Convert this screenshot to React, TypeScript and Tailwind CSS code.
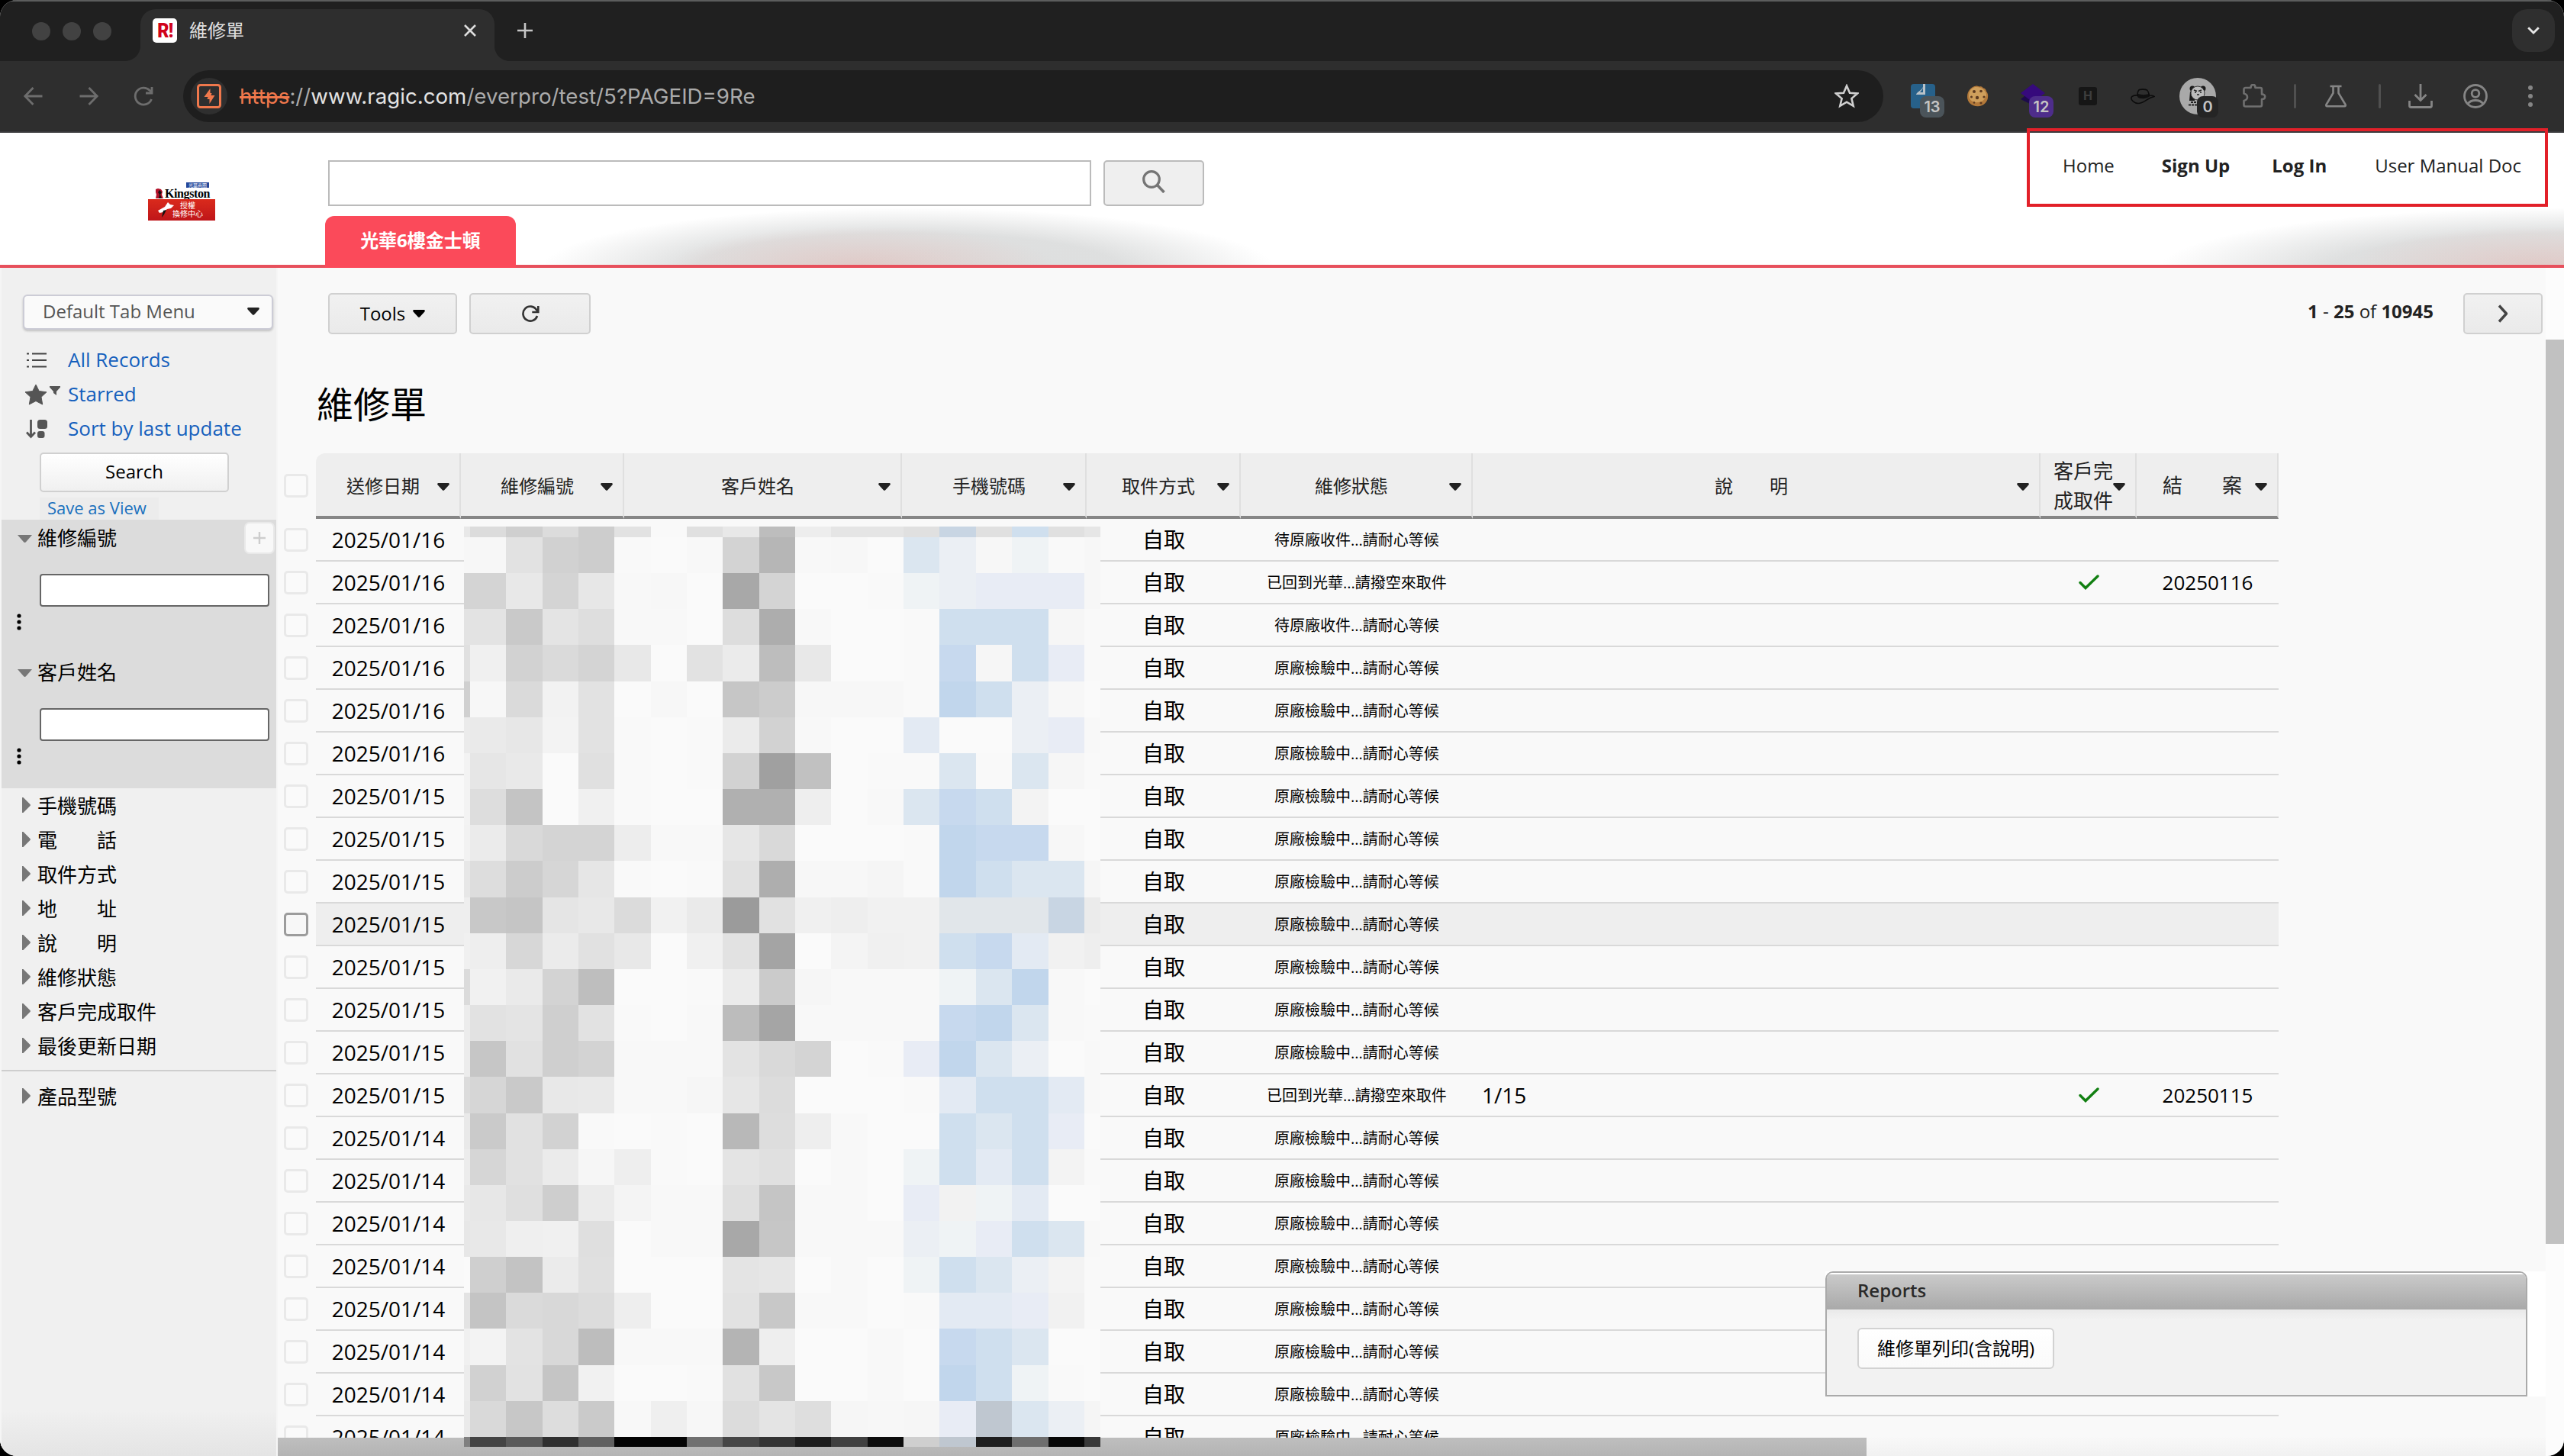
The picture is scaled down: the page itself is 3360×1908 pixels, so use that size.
import type { ReactNode } from 'react'
import clsx from 'clsx'

interface RepairRecord {
  date: string
  status: string
  note?: string
  done?: boolean
  closed?: string
}

const WAITING = '待原廠收件...請耐心等候'
const CHECKING = '原廠檢驗中...請耐心等候'
const RETURNED = '已回到光華...請撥空來取件'

const HOVERED_ROW = 9

const records: RepairRecord[] = [
  { date: '2025/01/16', status: WAITING },
  { date: '2025/01/16', status: RETURNED, done: true, closed: '20250116' },
  { date: '2025/01/16', status: WAITING },
  { date: '2025/01/16', status: CHECKING },
  { date: '2025/01/16', status: CHECKING },
  { date: '2025/01/16', status: CHECKING },
  { date: '2025/01/15', status: CHECKING },
  { date: '2025/01/15', status: CHECKING },
  { date: '2025/01/15', status: CHECKING },
  { date: '2025/01/15', status: CHECKING },
  { date: '2025/01/15', status: CHECKING },
  { date: '2025/01/15', status: CHECKING },
  { date: '2025/01/15', status: CHECKING },
  { date: '2025/01/15', status: RETURNED, note: '1/15', done: true, closed: '20250115' },
  { date: '2025/01/14', status: CHECKING },
  { date: '2025/01/14', status: CHECKING },
  { date: '2025/01/14', status: CHECKING },
  { date: '2025/01/14', status: CHECKING },
  { date: '2025/01/14', status: CHECKING },
  { date: '2025/01/14', status: CHECKING },
  { date: '2025/01/14', status: CHECKING },
  { date: '2025/01/14', status: CHECKING },
]

const columns = [
  { label: '送修日期' },
  { label: '維修編號' },
  { label: '客戶姓名' },
  { label: '手機號碼' },
  { label: '取件方式' },
  { label: '維修狀態' },
  { label: '說　　明' },
  { label: '客戶完成取件', large: true },
  { label: '結　　案', large: true },
]

const openFilters = ['維修編號', '客戶姓名']
const closedFilters = ['手機號碼', '電　　話', '取件方式', '地　　址', '說　　明', '維修狀態', '客戶完成取件', '最後更新日期']

// Letters are bluish tints, two hex digits are a plain grey
const tints: Record<string, string> = {
  p: '#c1d6ec',
  q: '#c7d9ee',
  r: '#cfdfee',
  s: '#dbe6f0',
  t: '#e3eaf3',
  u: '#ebeff4',
  v: '#c8d5e3',
  w: '#e8ecf5',
  x: '#eff3f5',
  y: '#e1e6ea',
  z: '#bfc7d0',
}

const mosaic = [
  'e8 dc cf dc cd e2 f9 e0 e8 bd ed e5 e5 e0 v e0 r e0 e6',
  'f7 f7 e2 d1 cd f9 fa f8 d3 b6 f8 f7 fa s u f7 x f9 f7',
  'd4 d4 e8 d4 e7 f8 f7 fa a8 d4 fa fa f9 x u w w w f7',
  'e3 e3 c9 e4 de f8 f8 fa dd ad f8 fa fa f9 r r r f6 f9',
  'e0 f0 d2 da d4 e8 fa e2 eb bd e8 fa fa f9 q f6 r w f9',
  'd0 f7 da f2 e2 fa f7 fa c6 cc f7 f7 f7 f9 p r u f7 fa',
  'eb ea e7 f3 e2 f9 fa f9 eb d2 f8 fa fa t fa fa u w f8',
  'f3 e6 e9 fa e0 f9 fa f9 d2 a0 c1 fa f9 f9 s f9 s f6 f9',
  'f3 dd c4 fa f0 f9 fa fa b0 b0 ee fa f8 s q r f3 fa fa',
  'f2 eb d9 d4 d4 ed f8 f8 e6 d9 fa fa fa f9 p q q f7 fa',
  'e7 dd cc d6 e6 f9 fa f9 e1 ae f7 f7 f5 f9 p r s s f6',
  'ee c8 c5 e5 e8 db f1 ea 9b e1 f0 ee f1 f1 y y y v eb',
  'f0 ee d7 eb e1 e8 fa f0 e2 a4 fa f4 f0 f1 r q t f1 ee',
  'db f1 ea d3 be fa fa f9 eb cb f6 f8 f8 f8 x s p f8 fa',
  'ec e2 e4 cf e2 f9 fa f8 bc a5 f8 f8 f8 f8 q p s f8 f9',
  'ec c6 e1 cf d3 f8 f8 f8 e3 d9 d4 fa f9 w p s u fa f8',
  'dc d6 c9 e8 e9 f8 f8 f6 e6 dc fa fa fa f9 t r r t f8',
  'e9 ca e1 d2 f9 fa f9 fa b8 dd ee f8 fa fa r s r w fa',
  'ec d6 e1 eb f6 ee f9 fa e4 e0 fa f8 fa x r t r f3 f9',
  'e9 e7 df ce eb f4 f8 f8 df c5 f8 f8 fa w f2 x t fa fa',
  'e7 e8 ef f0 df fa f8 f8 a8 c6 f8 f8 f8 u x w r s f8',
  'fa cf c3 eb e0 fa fa fa e4 e6 fa f8 fa x r s u f3 f9',
  'e3 c4 da d8 dc ee fa fa e2 c8 f8 f8 fa f9 t t w f1 f9',
  'f0 f3 e3 d8 bd f8 f8 f8 b4 ee fa fa f8 fa q r s fa fa',
  'ec d1 e2 c5 f1 fa fa f9 e1 c8 fa fa f8 fa p r x f9 fa',
  'ea d9 c7 dd ca f8 ef f7 dc e4 de f6 f7 f6 w z s u f5',
  '80 44 5a 30 60 04 04 70 46 34 1d 40 0d cf z 1e 6e 08 38',
]

const Caret = ({ className }: { className?: string }) => (
  <svg viewBox="0 0 16 10" className={clsx('h-[10px] w-[16px] shrink-0', className)}>
    <path d="M1.6 0h12.8c1.3 0 2 1.4 1 2.4L9.2 9.2c-.7.8-1.7.8-2.4 0L.6 2.4C-.4 1.4.3 0 1.6 0z" fill="currentColor" />
  </svg>
)

const ToolbarIcon = ({ children, className }: { children: ReactNode; className?: string }) => (
  <svg viewBox="0 0 32 32" fill="none" className={clsx('h-8 w-8 shrink-0', className)}>
    {children}
  </svg>
)

const Badge = ({ children, className }: { children: ReactNode; className: string }) => (
  <span
    className={clsx(
      "absolute top-4 flex h-7 items-center justify-center rounded-[8px] font-['Inter'] text-[20px] font-semibold text-[#c4c4c4]",
      className
    )}
  >
    {children}
  </span>
)

function TabStrip() {
  return (
    <div className="flex h-20 shrink-0 border-t-2 border-[#5c5d5d] bg-[#202020] pl-[42px]">
      <div className="flex w-[142px] gap-4 pt-[27px]">
        <span className="h-6 w-6 rounded-full bg-[#424242]" />
        <span className="h-6 w-6 rounded-full bg-[#424242]" />
        <span className="h-6 w-6 rounded-full bg-[#424242]" />
      </div>
      <div className="relative mt-[10px] flex h-[68px] w-[464px] items-center rounded-t-[20px] bg-[#2e2e2e] pb-3 pl-4">
        <svg viewBox="0 0 20 20" className="absolute bottom-0 -left-5 h-5 w-5">
          <path d="M20 0v20H0C11 20 20 11 20 0z" fill="#2e2e2e" />
        </svg>
        <svg viewBox="0 0 20 20" className="absolute -right-5 bottom-0 h-5 w-5">
          <path d="M0 0v20h20C9 20 0 11 0 0z" fill="#2e2e2e" />
        </svg>
        <span className="flex h-8 w-8 items-center justify-center rounded-[5px] bg-white">
          <span className="scale-x-[0.9] font-['Roboto'] text-[26px] font-black tracking-tight text-[#d0021b]">R!</span>
        </span>
        <span className="ml-4 text-[24px] leading-[32px] text-[#e0e0e0]">維修單</span>
        <svg viewBox="0 0 16 16" className="mr-6 ml-auto h-4 w-4">
          <path d="M1 1l14 14M15 1L1 15" stroke="#dcdcdc" strokeWidth="2.6" />
        </svg>
      </div>
      <svg viewBox="0 0 20 20" className="mt-7 ml-[30px] h-5 w-5">
        <path d="M10 0v20M0 10h20" stroke="#c6c6c6" strokeWidth="2.6" />
      </svg>
      <div className="mt-[10px] mr-3 ml-auto flex h-14 w-14 items-center justify-center rounded-[20px] bg-[#2f2f2f]">
        <svg viewBox="0 0 16 10" className="h-[10px] w-4">
          <path d="M1.2 1.2L8 8l6.8-6.8" stroke="#e6e6e6" strokeWidth="2.8" fill="none" />
        </svg>
      </div>
    </div>
  )
}

function Extensions() {
  return (
    <>
      <span className="relative ml-9 h-8 w-8">
        <ToolbarIcon>
          <rect width="32" height="32" rx="4" fill="#27618a" />
          <path d="M16 0h3v14H7c0-3 7-5 9-10z" fill="#b9c2c8" />
          <path d="M16 5c-1 3-3 4-4 6h4z" fill="#27618a" />
        </ToolbarIcon>
        <Badge className="left-3 w-8 bg-[#4b545a]">13</Badge>
      </span>
      <ToolbarIcon className="ml-10">
        <path
          d="M14 2.5c2-.5 3 1.5 5 .8 1.5-.5 3 .5 3.500 2 3 .2 4 2 4.500 4.500 2 2 2.500 5 2 8-.4 6-6 11.500-13 11.500C8 29.500 2 24 2 17 2 9 7 3.500 14 2.500z"
          fill="#b3793a"
        />
        <path d="M12 4C6 6 4 11 4 16c1 5 4 7 8 8 7 1 13-2 15-9 0-6-6-12-15-11z" fill="#cf9f5c" />
        <g fill="#5d3a20">
          <circle cx="11" cy="10" r="2" />
          <circle cx="20" cy="9.5" r="1.8" />
          <circle cx="15" cy="18" r="2.2" />
          <circle cx="24" cy="17" r="1.6" />
          <circle cx="7.5" cy="17" r="1.5" />
          <circle cx="20" cy="25" r="1.6" />
          <circle cx="11" cy="24.5" r="1.3" />
        </g>
      </ToolbarIcon>
      <span className="relative ml-10 h-8 w-8">
        <ToolbarIcon>
          <path d="M0 20l5-4h11v12z" fill="#1d0a4d" />
          <path d="M16 0l16 12-16 12L0 12z" fill="#360a7c" />
        </ToolbarIcon>
        <Badge className="left-[11px] w-8 bg-[#4e2d8b]">12</Badge>
      </span>
      <span className="ml-11 flex h-6 w-6 items-center justify-center rounded-[3px] bg-[#161616] font-['Roboto'] text-[17px] font-bold text-[#3d3d3d]">
        H
      </span>
      <ToolbarIcon className="ml-11">
        <path d="M9 17c0-1 0-3 .5-4 5 1.500 10 1.500 15 0l.8 3c-3 3.500-12.800 4.500-16.300 1z" fill="#101010" />
        <path
          d="M8.500 15c-3-.5-7 1-7.500 3-.8 3 4 7.500 9 7.500 8 0 11-7 21-9-2-1.500-4-1.500-6-1M9 16c0-4 0-7 2.500-8.500 2-.6 8-.6 10 .5 1.800 1.500 2.500 4.500 3 7.500"
          stroke="#0c0c0c"
          strokeWidth="1.6"
        />
      </ToolbarIcon>
      <span className="relative ml-8 h-12 w-12 rounded-full bg-[#a9a9a9]">
        <svg viewBox="0 0 48 48" className="h-12 w-12">
          <path d="M14 18l6-2v14h-7z" fill="#1a1a1a" />
          <circle cx="17" cy="14" r="3.5" fill="#1a1a1a" />
          <circle cx="31" cy="14" r="3.5" fill="#1a1a1a" />
          <circle cx="24" cy="20" r="9" fill="#bcbcbc" stroke="#3a3a3a" strokeWidth="1" />
          <path d="M19 16l4 1.500M29 16l-4 1.500M20 19h2M27 19h2M23 22h3" stroke="#222" strokeWidth="1.5" />
          <path d="M15 32h9M12 35.500h12" stroke="#222" strokeWidth="2" strokeDasharray="3 1" />
        </svg>
        <Badge className="!top-6 left-[23px] w-7 bg-[#252525]">0</Badge>
      </span>
      <ToolbarIcon className="ml-[34px]">
        <path
          d="M4.500 5h7c0-5.500 6-5.500 6 0H24a2 2 0 0 1 2 2v6.500c5.500 0 5.500 6.500 0 6.500v7.500a2 2 0 0 1-2 2H4.500a2 2 0 0 1-2-2V22c6-1.500 6-8 0-9.500V7a2 2 0 0 1 2-2z"
          stroke="#707070"
          strokeWidth="2.6"
          strokeLinejoin="round"
        />
      </ToolbarIcon>
      <span className="ml-9 h-8 w-[3px] rounded bg-[#505050]" />
      <ToolbarIcon className="ml-[36px]">
        <path d="M8.500 3h15M12.500 3v9L3.500 27c-.6 1.200 0 2.200 1 2.200h23c1 0 1.600-1 1-2.200L19.500 12V3" stroke="#858585" strokeWidth="2.6" />
      </ToolbarIcon>
      <span className="ml-[40px] h-8 w-[3px] rounded bg-[#505050]" />
      <ToolbarIcon className="ml-9">
        <path d="M16 0v21M8.500 14L16 21.500 23.500 14M1.500 22v6.500c0 1.500.5 2 2 2h25c1.500 0 2-.5 2-2V22" stroke="#858585" strokeWidth="2.8" />
      </ToolbarIcon>
      <ToolbarIcon className="ml-10">
        <circle cx="16" cy="16" r="14.5" stroke="#858585" strokeWidth="2.8" />
        <circle cx="16" cy="12.5" r="4.8" stroke="#858585" strokeWidth="2.8" />
        <path d="M6 26c4-6 16-6 20 0" stroke="#858585" strokeWidth="2.8" />
      </ToolbarIcon>
      <ToolbarIcon className="ml-10">
        <g fill="#858585">
          <circle cx="16" cy="5" r="3" />
          <circle cx="16" cy="16" r="3" />
          <circle cx="16" cy="27" r="3" />
        </g>
      </ToolbarIcon>
    </>
  )
}

function AddressBar() {
  return (
    <div className="flex h-[94px] shrink-0 items-center border-b-2 border-[#3a3a3c] bg-[#2e2e2e] pl-7">
      <ToolbarIcon className="mr-10">
        <path d="M27.500 16H5M15.500 5L4.800 16l10.700 11" stroke="#6d6d6d" strokeWidth="2.8" />
      </ToolbarIcon>
      <ToolbarIcon className="mr-10">
        <path d="M4.500 16H27M16.500 5l10.700 11-10.700 11" stroke="#6d6d6d" strokeWidth="2.8" />
      </ToolbarIcon>
      <ToolbarIcon className="mr-9">
        <path d="M26.500 20A11 11 0 1 1 24 8.300L27 11M27 4v8h-8" stroke="#6d6d6d" strokeWidth="2.8" />
      </ToolbarIcon>
      <div className="flex h-[68px] w-[2228px] items-center rounded-full bg-[#1e1e1e] pl-[10px]">
        <span className="flex h-12 w-12 items-center justify-center rounded-full bg-[#2f2f2f]">
          <ToolbarIcon>
            <rect x="1.5" y="1.5" width="29" height="29" rx="3" stroke="#f0784c" strokeWidth="3" />
            <path d="M17.500 6l-8 11h5l-1 3h3v6l7-11h-5l1-3h-2z" fill="#f0784c" />
          </ToolbarIcon>
        </span>
        <span className="ml-4 font-['Inter'] text-[27.7px] leading-[40px] text-[#ababab]">
          <span className="text-[#f0784c] line-through decoration-3">https</span>
          ://<span className="text-[#e3e3e3]">www.ragic.com</span>/everpro/test/5?PAGEID=9Re
        </span>
        <ToolbarIcon className="mr-8 ml-auto">
          <path d="M16 2.500l4 9.200 10 .8-7.600 6.600 2.300 9.800L16 23.700l-8.700 5.200 2.300-9.800L2 12.500l10-.8z" stroke="#d0d0d0" strokeWidth="2.6" />
        </ToolbarIcon>
      </div>
      <Extensions />
    </div>
  )
}

function Logo() {
  return (
    <div className="mt-[65px] ml-[194px] flex h-[50px] w-[88px] flex-col">
      <span className="ml-[50px] flex h-[7px] w-[30px] items-center justify-center bg-[#23479a] text-[6px] leading-none text-white">
        光華商圈
      </span>
      <span className="flex h-[15px] items-center pl-[9px]">
        <svg viewBox="0 0 12 14" className="h-[14px] w-3">
          <path d="M1 1l3-1 4 1 2 3-1 4 2 5H1l1-5-1-3z" fill="#b3122a" />
          <path d="M6 2l3 3-2 3 2 5H5l1-5-2-3z" fill="#1b1012" />
        </svg>
        <span className="ml-[1px] font-['Liberation_Serif'] text-[16px] leading-[14px] font-bold tracking-[-0.400px] text-black">
          Kingston
        </span>
      </span>
      <span className="flex h-7 items-center bg-gradient-to-b from-[#da2a1c] to-[#bf1519] pl-3">
        <svg viewBox="0 0 24 22" className="h-[22px] w-6">
          <path d="M1 12l9-5 4-6 3 3 5 1-4 4-5 1-5 4-5 1z" fill="#fff" />
          <path d="M8 12l4-1-3 6-3 4 1-5z" fill="#111" />
        </svg>
        <span className="-ml-1 text-center text-[10px] leading-[11px] text-white">
          授權
          <br />
          換修中心
        </span>
      </span>
    </div>
  )
}

function SiteHeader() {
  return (
    <header className="flex h-[177px] shrink-0 border-b-4 border-[#e7505c] bg-white bg-[radial-gradient(ellipse_250px_50px_at_1130px_173px,rgba(228,178,172,0.45),transparent),radial-gradient(ellipse_480px_80px_at_1190px_178px,rgba(200,202,202,0.62)_0%,rgba(202,204,204,0.62)_58%,rgba(255,255,255,0)_100%),radial-gradient(ellipse_250px_50px_at_3330px_173px,rgba(228,178,172,0.45),transparent),radial-gradient(ellipse_540px_80px_at_3370px_178px,rgba(200,202,202,0.62)_0%,rgba(202,204,204,0.62)_58%,rgba(255,255,255,0)_100%)]">
      <div className="w-[426px]">
        <Logo />
      </div>
      <div className="flex flex-col items-start pt-9">
        <div className="ml-1 flex gap-4">
          <input className="h-[60px] w-[1000px] border-2 border-[#bbb] bg-white" />
          <button className="flex h-[60px] w-[132px] items-center justify-center rounded-[5px] border-2 border-[#bbb] bg-[#efefef]">
            <svg viewBox="0 0 30 30" className="-mt-1 h-[30px] w-[30px]" fill="none" stroke="#757575">
              <circle cx="12" cy="12" r="10.3" strokeWidth="3.2" />
              <path d="M19.500 19.500l9 9.500" strokeWidth="3.6" />
            </svg>
          </button>
        </div>
        <div className="relative z-10 mt-[13px] -mb-1 flex h-[68px] w-[250px] items-center justify-center rounded-t-[12px] bg-[#fb4a5a] pb-1 text-[24px] font-bold text-white">
          光華6樓金士頓
        </div>
      </div>
      <nav className="mt-[25px] mr-[56px] ml-auto flex h-9 items-center text-[24px] text-[#222]">
        <a>Home</a>
        <a className="ml-[62px] font-bold">Sign Up</a>
        <a className="ml-[55px] font-bold">Log In</a>
        <a className="ml-[63px]">User Manual Doc</a>
      </nav>
    </header>
  )
}

const ClosedFilter = ({ name }: { name: string }) => (
  <div className="flex h-[45px] items-center pl-[27px] text-[26px] text-black">
    <svg viewBox="0 0 11 20" className="mb-1 h-5 w-[11px]">
      <path d="M0 0h1.500L10 8.500c1.200 1 1.200 2 0 3L1.500 20H0z" fill="#777" />
    </svg>
    <span className="ml-[9px]">{name}</span>
  </div>
)

function Sidebar() {
  return (
    <aside className="flex w-[364px] shrink-0 flex-col border-x-2 border-[#f5f5f5] bg-[#f0f0f0] bg-[linear-gradient(to_top,#e4e4e4,#f0f0f0_60px)]">
      <div className="mt-[35px] ml-7 flex h-[46px] w-[328px] shrink-0 items-center rounded-[6px] border-2 border-[#ccccd6] bg-[#fafafa] pr-[16px] pb-[2px] pl-[24px] text-[24px] text-[#555] shadow-[0_2px_3px_rgba(0,0,0,0.2)]">
        Default Tab Menu
        <Caret className="ml-auto text-[#222]" />
      </div>

      <div className="mt-[17px] text-[26px] text-[#1560bd]">
        <div className="flex h-[45px] items-center">
          <svg viewBox="0 0 28 20" className="ml-8 h-5 w-7" stroke="#444" strokeWidth="2.2">
            <path d="M1 1.500h3M8 1.500h19M1 10h3M8 10h19M1 18.500h3M8 18.500h19" />
          </svg>
          <span className="ml-[27px]">All Records</span>
        </div>
        <div className="flex h-[45px] items-center">
          <svg viewBox="0 0 30 28" className="ml-[30px] h-7 w-[30px]">
            <path d="M15 1l4.200 8.500 9.800 1.300-7 6.500 1.700 9.700L15 22.500 6.300 27 8 17.300 1 10.800l9.800-1.300z" fill="#555" stroke="#555" strokeLinejoin="round" />
          </svg>
          <svg viewBox="0 0 14 12" className="mb-[10px] ml-[3px] h-3 w-[14px]">
            <path d="M0 0h14v1.500L9 7v5l-4-3V7L0 1.500z" fill="#555" />
          </svg>
          <span className="ml-[10px]">Starred</span>
        </div>
        <div className="flex h-[45px] items-center">
          <svg viewBox="0 0 28 26" className="ml-8 h-[26px] w-7">
            <path d="M6.500 1v22M1 17.500L6.500 23.500l5.500-6" stroke="#555" strokeWidth="2.8" fill="none" />
            <rect x="15" y="1" width="13" height="12" rx="3.5" fill="#555" />
            <rect x="15" y="16" width="9.5" height="9" rx="3" fill="#555" />
          </svg>
          <span className="ml-[27px]">Sort by last update</span>
        </div>
      </div>

      <button className="mt-[9px] ml-[50px] h-[52px] w-[248px] shrink-0 rounded-[5px] border-2 border-[#d0d0d0] bg-gradient-to-b from-white to-[#f0f0f0] pb-[2px] text-[24px] text-black">
        Search
      </button>
      <div className="mt-[7px] ml-[50px] flex h-[29px] w-[156px] shrink-0 items-center bg-[#ececec] pb-[2px] pl-[10px] text-[22px] whitespace-nowrap text-[#1a70bd]">
        Save as View
      </div>

      <div className="shrink-0 bg-[#dcdcdc]">
        {openFilters.map((name, i) => (
          <div key={name} className="flex h-[176px] flex-col">
            <div className="flex h-12 items-center pr-[2px] pl-[21px] text-[26px] text-black">
              <svg viewBox="0 0 19 10" className="mt-[2px] h-[10px] w-[19px]">
                <path d="M0 0h19L11 9.300c-1 .9-2 .9-3 0z" fill="#777" />
              </svg>
              <span className="ml-[7px]">{name}</span>
              {i === 0 && (
                <span className="ml-auto flex h-[42px] w-[40px] items-center justify-center rounded-[7px] border-2 border-[#e9e9e9] bg-[#f8f8f8]">
                  <svg viewBox="0 0 16 16" className="h-4 w-4">
                    <path d="M8 0v16M0 8h16" stroke="#cdcdcd" strokeWidth="2.4" />
                  </svg>
                </span>
              )}
            </div>
            <input className="mt-[23px] ml-[50px] h-[43px] w-[301px] rounded-[4px] border-2 border-[#666] bg-white" />
            <svg viewBox="0 0 6 22" className="mt-[9px] ml-5 h-[22px] w-[6px]">
              <circle cx="3" cy="3" r="2.6" />
              <circle cx="3" cy="11" r="2.6" />
              <circle cx="3" cy="19" r="2.6" />
            </svg>
          </div>
        ))}
      </div>

      <div className="mt-[1px] border-b-2 border-[#cecece] pb-[8px]">
        {closedFilters.map(name => (
          <ClosedFilter key={name} name={name} />
        ))}
      </div>
      <div className="mt-[11px]">
        <ClosedFilter name="產品型號" />
      </div>
    </aside>
  )
}

const Checkbox = ({ active }: { active?: boolean }) => (
  <span className="w-[50px] shrink-0 pb-[2px] pl-2">
    <span
      className={clsx(
        'block h-[31px] w-8 rounded-[5px] border-3',
        active ? 'border-[#9c9c9c] bg-[#f7f7f7]' : 'border-[#e9e9e9] bg-[#fafafa]'
      )}
    />
  </span>
)

const GRID = 'grid grid-cols-[190px_214px_364px_242px_202px_304px_744px_126px_186px]'

function RecordTable() {
  return (
    <div className="min-h-0 flex-1 overflow-hidden">
      <div className="flex h-[86px] items-center">
        <Checkbox />
        <div className={clsx(GRID, 'h-full overflow-hidden rounded-tl-[12px] bg-[#eee]')}>
          {columns.map(({ label, large }) => (
            <div
              key={label}
              className="relative flex items-center justify-center border-r-2 border-b-4 border-r-[#dfdfdf] border-b-[#868686] pt-[3px] pr-3 text-[#222]"
            >
              <span className={clsx('text-center', large ? 'w-[108px] text-[26px] leading-[39px]' : 'text-[24px]', label === '客戶完成取件' && '!w-[80px]')}>
                {label}
              </span>
              <Caret className="absolute top-[39px] right-[13px]" />
            </div>
          ))}
        </div>
      </div>

      {records.map((r, i) => (
        <div key={i} className="flex h-14 items-center">
          <Checkbox active={i === HOVERED_ROW} />
          <div
            className={clsx(
              GRID,
              'h-full items-center border-b-2 border-[#d9d9d9] text-center text-[28px] text-black',
              i === HOVERED_ROW && 'bg-[#eee]'
            )}
          >
            <span>{r.date}</span>
            <span />
            <span />
            <span />
            <span>自取</span>
            <span className="pt-[2px] text-[20px]">{r.status}</span>
            <span className="pl-3 text-left">{r.note}</span>
            <span className="flex justify-center">
              {r.done && (
                <svg viewBox="0 0 27 20" className="h-5 w-[27px]">
                  <path d="M2 10.500l7 7L25 2" fill="none" stroke="#128012" strokeWidth="3.4" strokeLinecap="round" />
                </svg>
              )}
            </span>
            <span className="text-[26px]">{r.closed}</span>
          </div>
        </div>
      ))}
    </div>
  )
}

const Mosaic = () => (
  <div className="absolute top-[339px] left-[244px] grid h-[1206px] w-[834px] grid-cols-[8px_repeat(17,47.350px)_21px] grid-rows-[14px_repeat(25,47.160px)_13px]">
    {mosaic.flatMap((row, y) =>
      row.split(' ').map((t, x) => <span key={`${y}-${x}`} style={{ backgroundColor: tints[t] ?? `#${t}${t}${t}` }} />)
    )}
  </div>
)

const ReportsPanel = () => (
  <div className="absolute top-[1315px] left-[2028px] flex w-[944px] bg-white">
    <section className="h-[164px] w-[920px] overflow-hidden rounded-t-[10px] border-2 border-[#aaa] bg-[#f2f2f2]">
      <div className="flex h-12 items-center border-t-2 border-white bg-gradient-to-b from-[#cacaca] to-[#a9a9a9] pb-1 pl-10 text-[24px] font-semibold text-[#2a2a2a]">
        Reports
      </div>
      <div className="h-full bg-[linear-gradient(#e9e9e9,#f2f2f2_14px)] pt-6 pl-10">
        <button className="h-[54px] w-[258px] rounded-[6px] border-2 border-[#d2d2d2] bg-gradient-to-b from-white to-[#fafafa] text-[24px] whitespace-nowrap text-black">
          維修單列印(含說明)
        </button>
      </div>
    </section>
  </div>
)

function Main() {
  const button = 'flex h-[54px] items-center justify-center rounded-[5px] border-2 border-[#d0d0d0] bg-gradient-to-b from-[#f1f1f1] to-[#eaeaea]'
  return (
    <main className="relative flex w-[2972px] shrink-0 flex-col bg-[#f9f9f9]">
      <div className="mt-[33px] flex h-[54px] shrink-0 items-center pl-[66px]">
        <button className={clsx(button, 'w-[169px] gap-[10px] pb-[1px] text-[24px] text-black')}>
          Tools
          <Caret />
        </button>
        <button className={clsx(button, 'ml-4 w-[159px]')}>
          <svg viewBox="0 0 24 24" className="h-6 w-6">
            <path d="M21 15A9.500 9.500 0 1 1 20 7l2 2M22.300 2v8h-8" fill="none" stroke="#333" strokeWidth="2.6" />
          </svg>
        </button>
        <span className="mr-[39px] mb-[7px] ml-auto text-[24px] text-[#222]">
          <b>1</b> - <b>25</b> of <b>10945</b>
        </span>
        <button className={clsx(button, 'mr-1 w-[104px]')}>
          <svg viewBox="0 0 14 24" className="h-6 w-[14px]">
            <path d="M2 1.500L11.500 12 2 22.500" fill="none" stroke="#444" strokeWidth="3.4" strokeLinejoin="round" />
          </svg>
        </button>
      </div>
      <h1 className="flex h-[156px] shrink-0 items-center pt-[28px] pl-[51px] text-[48px] text-black">維修單</h1>
      <RecordTable />
      <div className="h-6 shrink-0 bg-gradient-to-b from-[#f8f8f8] to-[#f1f1f1]">
        <div className="h-full w-[2082px] bg-gradient-to-b from-[#bebebe] to-[#b4b4b4]" />
      </div>
      <Mosaic />
      <ReportsPanel />
    </main>
  )
}

export default function App() {
  return (
    <div className="h-[1908px] w-[3360px] overflow-hidden bg-black font-['Open_Sans','Noto_Sans_CJK_TC',sans-serif]">
      <div className="relative flex h-full w-full flex-col overflow-hidden rounded-[22px] bg-white">
        <TabStrip />
        <AddressBar />
        <SiteHeader />
        <div className="flex min-h-0 flex-1">
          <Sidebar />
          <Main />
          <div className="flex-1 bg-[#fcfcfc] pt-[94px]">
            <div className="h-[1185px] bg-[#c1c1c1]" />
          </div>
        </div>
        <div className="absolute top-[168px] left-[2656px] h-[103px] w-[683px] border-4 border-[#e22029]" />
      </div>
    </div>
  )
}
